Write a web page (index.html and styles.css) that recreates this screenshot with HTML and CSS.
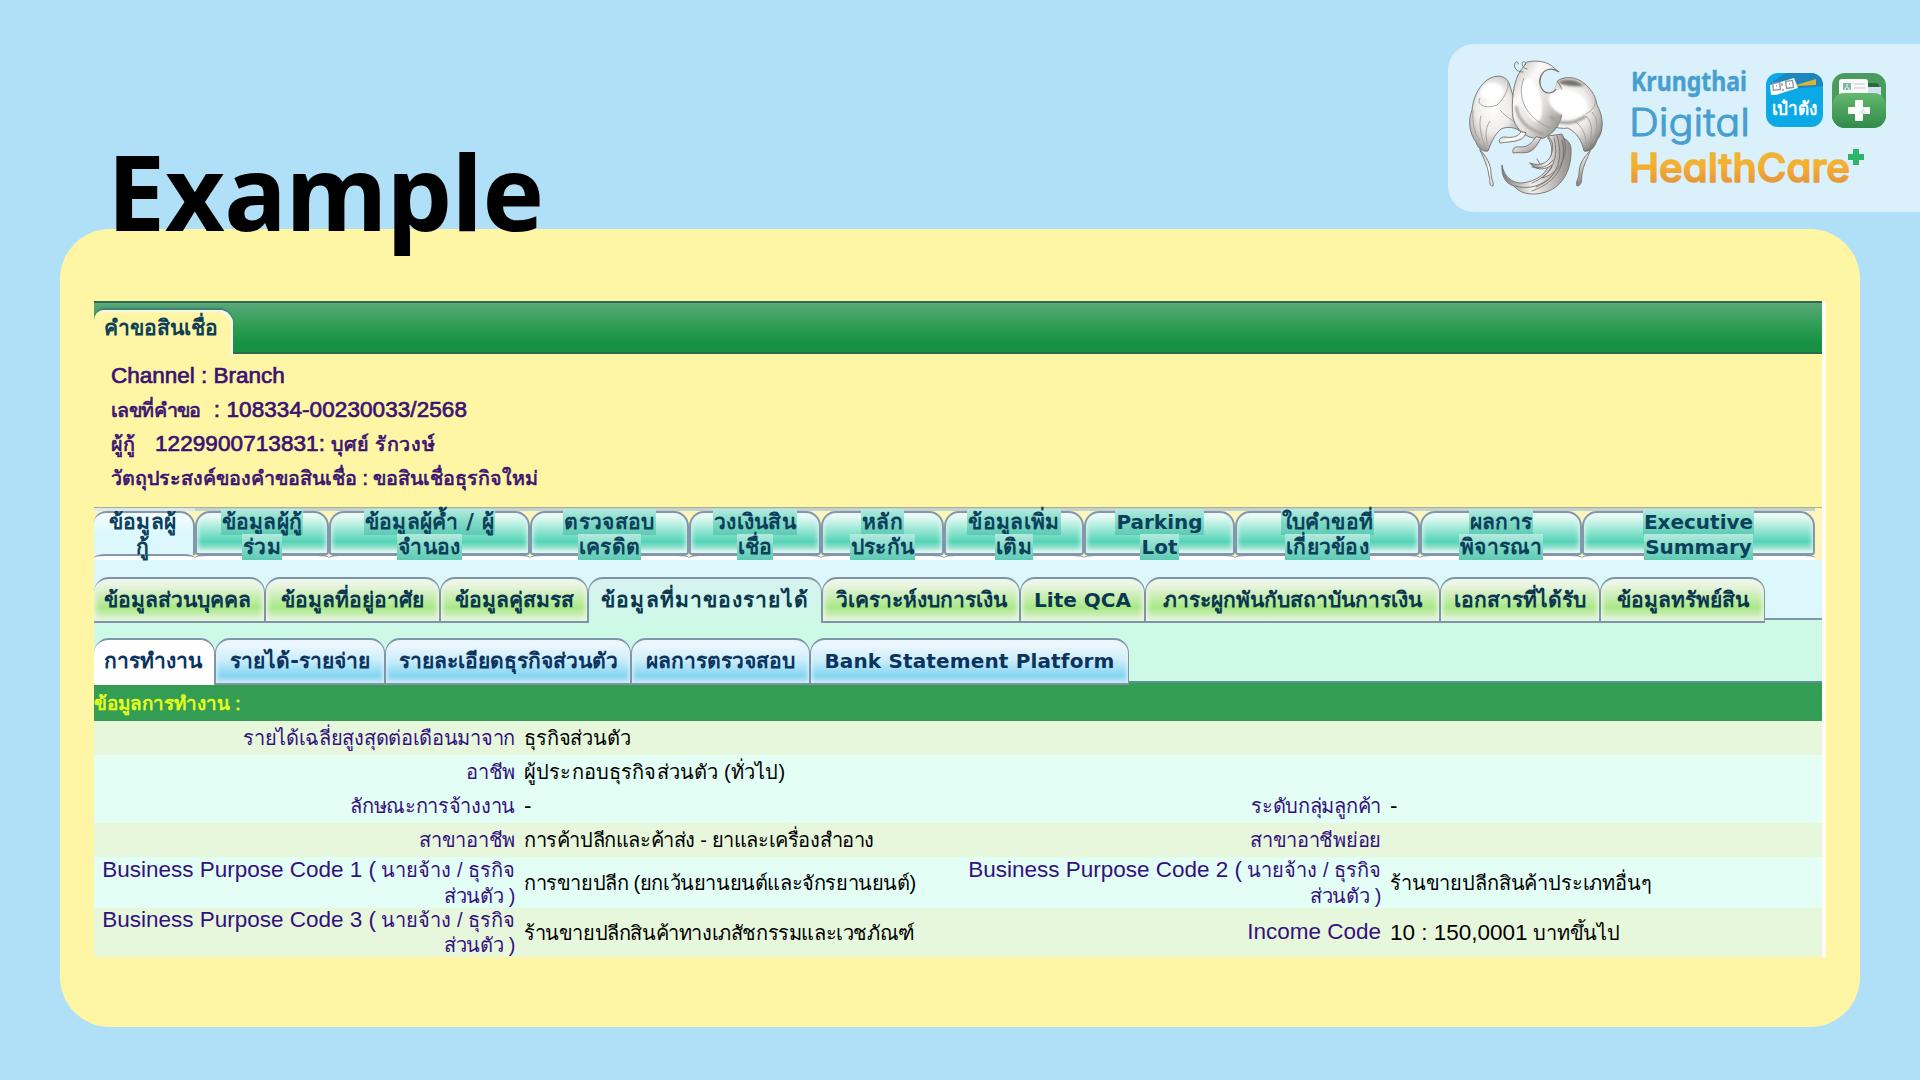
FILE: index.html
```html
<!DOCTYPE html>
<html lang="th">
<head>
<meta charset="utf-8">
<title>Example</title>
<link rel="stylesheet" href="styles.css">
</head>
<body>
<div class="slide">
  <header class="top">
    <h1 class="title">Example</h1>
    <div class="brand">
      <svg class="bird" width="150" height="150" viewBox="0 0 150 150" aria-hidden="true">
        <defs>
          <linearGradient id="silver" x1="0" y1="0" x2="1" y2="1">
            <stop offset="0" stop-color="#b9b5b0"/><stop offset=".3" stop-color="#fbfaf9"/>
            <stop offset=".6" stop-color="#dedbd8"/><stop offset="1" stop-color="#7c7874"/>
          </linearGradient>
          <radialGradient id="wing" cx=".45" cy=".42" r=".65">
            <stop offset="0" stop-color="#fff"/><stop offset=".5" stop-color="#efedeb"/>
            <stop offset=".8" stop-color="#bbb7b3"/><stop offset="1" stop-color="#7f7b78"/>
          </radialGradient>
          <linearGradient id="tail" x1="0" y1="0" x2="1" y2="0">
            <stop offset="0" stop-color="#7d7975"/><stop offset=".45" stop-color="#f4f2f0"/><stop offset="1" stop-color="#918d89"/>
          </linearGradient>
          <filter id="soft"><feGaussianBlur stdDeviation="1.1"/></filter>
        </defs>
        <g stroke="#75716d" stroke-width=".9" stroke-linejoin="round" stroke-linecap="round">
          <path fill="url(#tail)" d="M88 88C98 84 110 88 111 98C112 118 104 136 86 142C70 147 58 142 54 136C46 134 41 126 42 115C44 127 52 133 62 133C78 131 88 123 90 110C93 101 92 94 88 88Z"/>
          <path fill="url(#tail)" d="M70 113C80 117 90 113 92 102C94 95 92 90 88 86L102 84C110 99 104 122 82 128C91 121 92 117 92 115C84 121 74 120 70 113Z"/>
          <path fill="none" d="M97 86C104 108 98 128 76 137M102 90C108 112 98 132 72 141M94 88C99 106 94 124 72 133M55 136C68 140 82 136 92 126M72 117C80 119 88 117 93 110M77 109L80 114"/>
          <path fill="url(#wing)" d="M49 33C46 25 36 24 27 30C17 38 13 50 12 60C8 70 9 83 16 92C18 99 23 102 28 101C31 93 34 85 41 79C48 76 56 77 62 83L58 62Z"/>
          <path fill="url(#wing)" d="M97 31C104 26 116 26 125 34C133 41 136 48 137 55C144 67 144 82 137 90C134 99 130 102 124 101C122 91 117 83 108 78C96 80 86 74 82 66Z"/>
          <path fill="url(#silver)" d="M67 12C76 10 88 11 94 18L99 22C93 19 87 20 82 24C77 31 80 39 88 42C92 44 95 38 97 31C103 38 106 50 103 59C101 73 96 82 84 88C70 91 57 82 53 68C51 54 53 30 61 20Z"/>
          <path fill="url(#silver)" d="M20 100C26 106 31 114 31 123C31 129 34 132 33 136C28 136 31 131 29 126C28 117 24 109 20 100ZM130 101C124 107 119 114 119 123C119 129 115 132 117 136C123 135 121 129 122 124C123 115 128 108 130 101Z"/>
          <path fill="url(#silver)" d="M61 82C58 87 52 88 45 87C40 87 38 90 40 93C46 92 54 92 59 90C63 89 65 86 66 83ZM76 87C72 92 69 97 61 97C54 96 52 99 53 103C60 102 66 104 71 101C76 98 78 93 81 88Z"/>
          <path fill="none" d="M63 22C57 22 53 18 55 13C56 11 59 12 58 14M67 19C62 18 61 13 63 12C65 11 67 13 65 15"/>
        </g>
        <g filter="url(#soft)">
          <ellipse cx="108" cy="53" rx="20" ry="13" fill="#fff" transform="rotate(20 108 53)"/>
          <ellipse cx="72" cy="50" rx="9" ry="22" fill="#fff" transform="rotate(-14 72 50)"/>
          <ellipse cx="32" cy="42" rx="11" ry="9" fill="#fff"/>
          <path d="M98 32C106 28 117 29 124 36C114 37 104 36 98 32Z" fill="#77736f"/>
          <path d="M90 66C100 76 114 74 126 66" fill="none" stroke="#a29e99" stroke-width="3"/>
          <path d="M56 56C58 70 68 80 84 84" fill="none" stroke="#a39f9b" stroke-width="2.5"/>
        </g>
        <path d="M99 22C92 17 84 19 81 26C78 35 82 42 88 43C93 43 96 38 97 31C104 24 101 22 99 22Z" fill="#daf0fb"/>
        <path d="M99 22C92 17 84 19 81 26C78 35 82 42 88 43C92 43 95 41 96 39" fill="none" stroke="#75716d" stroke-width="1.2"/>
        <g fill="none" stroke="#a09c98" stroke-width=".9">
          <path d="M20 48C16 54 25 60 37 55C44 49 49 39 48 32M13 60C12 72 14 83 20 91M21 66C18 75 22 90 26 98M30 71C24 80 26 89 28 96M40 60C47 68 53 70 54 72M126 64C133 60 136 56 135 49M126 66C134 74 132 86 128 98M132 62C140 70 137 82 133 93M114 71C123 76 126 86 127 97M64 28C56 47 66 68 90 78"/>
        </g>
      </svg>
      <svg class="wordmark" width="250" height="130" viewBox="0 0 250 130">
        <defs>
          <linearGradient id="gold" gradientUnits="userSpaceOnUse" x1="0" y1="85" x2="0" y2="120"><stop offset="0" stop-color="#e8b53b"/><stop offset=".5" stop-color="#f6b02e"/><stop offset="1" stop-color="#e5963f"/></linearGradient>
          <linearGradient id="green" x1="0" y1="0" x2="0" y2="1"><stop offset="0" stop-color="#63b96c"/><stop offset="1" stop-color="#2f8a4c"/></linearGradient>
        </defs>
        <text class="wm wm-bank" x="-1" y="28" textLength="116" lengthAdjust="spacingAndGlyphs">Krungthai</text>
        <text class="wm wm-digital" x="-3" y="73" textLength="121" lengthAdjust="spacingAndGlyphs">Digital</text>
        <text class="wm wm-health" x="-3" y="119" textLength="221" lengthAdjust="spacingAndGlyphs">HealthCare</text>
        <path fill="#2fb567" d="M221 86h6v5h5v6h-5v5h-6v-5h-5v-6h5z"/>
      </svg>
      <div class="apps">
        <svg width="57" height="54" viewBox="0 0 57 54">
          <clipPath id="c1"><rect width="57" height="54" rx="12"/></clipPath>
          <g clip-path="url(#c1)">
            <rect width="57" height="54" fill="#0ba9e6"/>
            <path fill="#1d86bf" d="M20 0H57V13L5 18V10Z"/>
            <path fill="#fff" d="M4 12L28 5L32 15L10 22H5Z"/>
            <path fill="#d9b23a" d="M30 12L50 6V12L31 13Z"/>
            <g fill="none" stroke="#8c9aa6" stroke-width="1.4"><rect x="7" y="10" width="7" height="7" transform="rotate(-6 10 13)"/><rect x="20" y="8" width="7" height="7" transform="rotate(-8 23 11)"/><path d="M16 10v3M17 16v2M10 13h1M23 11h1"/></g>
            <text class="app-name" x="6" y="42" textLength="45" lengthAdjust="spacingAndGlyphs">เป๋าตัง</text>
          </g>
        </svg>
        <svg width="54" height="55" viewBox="0 0 54 55">
          <rect width="54" height="55" rx="13" fill="#4a9b5d"/>
          <path fill="#2c6943" d="M36 10h8a3 3 0 0 1 3 4v8H36z"/>
          <rect x="30" y="14" width="19" height="12" fill="#cfe0ee"/>
          <rect x="7" y="6" width="29" height="22" rx="3" fill="#f8fbfa"/>
          <rect x="11" y="10" width="8" height="7" fill="#7db8a6"/><path d="M13 17c0-4 4-4 4 0M15 11v2" stroke="#fff" fill="none"/>
          <path d="M22 11h11M22 15h11" stroke="#d3d6dc" stroke-width="1.5"/>
          <path fill="url(#green)" d="M0 34C0 26 5 20 12 20H42C49 20 54 26 54 34V42A13 13 0 0 1 41 55H13A13 13 0 0 1 0 42Z"/>
          <path fill="#fff" d="M24 27h6q1 0 1 1v6h6q1 0 1 1v5q0 1-1 1h-6v6q0 1-1 1h-6q-1 0-1-1v-6h-6q-1 0-1-1v-5q0-1 1-1h6v-6q0-1 1-1z"/>
          <path fill="#c9dfd0" d="M31 34l-4 7h4l4-1z" opacity=".6"/>
        </svg>
      </div>
    </div>
  </header>

  <main class="card">
    <div class="screen">
      <nav class="main-bar"><div class="main-tab">คำขอสินเชื่อ</div></nav>
      <section class="summary">
        <p><span class="en">Channel : Branch</span></p>
        <p><span class="req">เลขที่คำขอ</span><span class="en gap-a">: 108334-00230033/2568</span></p>
        <p><span>ผู้กู้</span><span class="en gap-b">1229900713831: </span><span class="name">บุศย์ รักวงษ์</span></p>
        <p>วัตถุประสงค์ของคำขอสินเชื่อ : ขอสินเชื่อธุรกิจใหม่</p>
      </section>

      <nav class="tabs-a">
        <div class="ta current"><b>ข้อมูลผู้</b><b>กู้</b></div>
        <div class="ta"><b>ข้อมูลผู้กู้</b><b>ร่วม</b></div>
        <div class="ta"><b>ข้อมูลผู้ค้ำ / ผู้</b><b>จำนอง</b></div>
        <div class="ta"><b>ตรวจสอบ</b><b>เครดิต</b></div>
        <div class="ta"><b>วงเงินสิน</b><b>เชื่อ</b></div>
        <div class="ta"><b>หลัก</b><b>ประกัน</b></div>
        <div class="ta"><b>ข้อมูลเพิ่ม</b><b>เติม</b></div>
        <div class="ta"><b class="en">Parking</b><b class="en">Lot</b></div>
        <div class="ta"><b>ใบคำขอที่</b><b>เกี่ยวข้อง</b></div>
        <div class="ta"><b>ผลการ</b><b>พิจารณา</b></div>
        <div class="ta"><b class="en">Executive</b><b class="en">Summary</b></div>
      </nav>

      <nav class="tabs-b">
        <div class="tb">ข้อมูลส่วนบุคคล</div>
        <div class="tb">ข้อมูลที่อยู่อาศัย</div>
        <div class="tb">ข้อมูลคู่สมรส</div>
        <div class="tb current">ข้อมูลที่มาของรายได้</div>
        <div class="tb">วิเคราะห์งบการเงิน</div>
        <div class="tb"><span class="en">Lite QCA</span></div>
        <div class="tb">ภาระผูกพันกับสถาบันการเงิน</div>
        <div class="tb">เอกสารที่ได้รับ</div>
        <div class="tb">ข้อมูลทรัพย์สิน</div>
      </nav>

      <nav class="tabs-c">
        <div class="tc current">การทำงาน</div>
        <div class="tc">รายได้-รายจ่าย</div>
        <div class="tc">รายละเอียดธุรกิจส่วนตัว</div>
        <div class="tc">ผลการตรวจสอบ</div>
        <div class="tc"><span class="en">Bank Statement Platform</span></div>
      </nav>

      <h2 class="section">ข้อมูลการทำงาน :</h2>
      <dl class="form">
        <div class="row alt"><dt>รายได้เฉลี่ยสูงสุดต่อเดือนมาจาก</dt><dd>ธุรกิจส่วนตัว</dd></div>
        <div class="row"><dt>อาชีพ</dt><dd class="wide">ผู้ประกอบธุรกิจส่วนตัว (ทั่วไป)</dd></div>
        <div class="row"><dt>ลักษณะการจ้างงาน</dt><dd class="en">-</dd><dt>ระดับกลุ่มลูกค้า</dt><dd class="en">-</dd></div>
        <div class="row alt"><dt>สาขาอาชีพ</dt><dd class="tight">การค้าปลีกและค้าส่ง - ยาและเครื่องสำอาง</dd><dt>สาขาอาชีพย่อย</dt><dd></dd></div>
        <div class="row tall"><dt><span class="en">Business Purpose Code 1 (</span> <span class="th">นายจ้าง / ธุรกิจ</span><br>ส่วนตัว )</dt><dd class="tight">การขายปลีก (ยกเว้นยานยนต์และจักรยานยนต์)</dd><dt><span class="en">Business Purpose Code 2 (</span> <span class="th">นายจ้าง / ธุรกิจ</span><br>ส่วนตัว )</dt><dd>ร้านขายปลีกสินค้าประเภทอื่นๆ</dd></div>
        <div class="row tall alt last"><dt><span class="en">Business Purpose Code 3 (</span> <span class="th">นายจ้าง / ธุรกิจ</span><br>ส่วนตัว )</dt><dd class="tight">ร้านขายปลีกสินค้าทางเภสัชกรรมและเวชภัณฑ์</dd><dt class="en">Income Code</dt><dd><span class="en">10 : 150,0001</span> บาทขึ้นไป</dd></div>
      </dl>
    </div>
  </main>
</div>
</body>
</html>
```
FILE: styles.css
```css
* { box-sizing: border-box; }
body {
  margin: 0;
  background: #b0e0f7;
  font-family: "Liberation Sans", sans-serif;
  overflow: hidden;
}
p, h1, h2, dl, dd, dt { margin: 0; }

.slide { width: 1920px; height: 1080px; }

.top {
  height: 229px;
  display: flex;
  justify-content: space-between;
  align-items: flex-start;
  position: relative;
  z-index: 1;
}
.title {
  padding: 120px 0 0 107px;
  font: bold 104px/142px "Noto Sans", sans-serif;
  letter-spacing: -.6px;
  color: #000;
}

.brand {
  width: 472px;
  height: 168px;
  margin-top: 44px;
  padding: 6px 0 0 12px;
  display: flex;
  background: #daf0fb;
  border-radius: 26px 0 0 26px;
}
.bird { flex: none; }
.wordmark { margin: 13px 0 0 22px; overflow: visible; flex: none; }
.wm { font-family: Inter, sans-serif; stroke-linejoin: round; font-feature-settings: "cv11"; }
.wm-bank { font-family: "Noto Sans", sans-serif; font-size: 26.5px; font-weight: 700; fill: #469fd0; stroke: #469fd0; stroke-width: .4; }
.wm-digital { font-size: 38px; font-weight: 300; fill: #469fd0; stroke: #469fd0; stroke-width: 1; }
.wm-health { font-size: 40px; font-weight: 500; fill: url(#gold); stroke: url(#gold); stroke-width: 1.5; }
.apps { display: flex; gap: 9px; margin: 23px 0 0 -116px; align-items: flex-start; flex: none; }
.app-name { font: bold 19px "Noto Sans", sans-serif; fill: #fff; }

.card {
  width: 1800px;
  height: 798px;
  margin-left: 60px;
  padding: 72px 0 0 34px;
  background: #fef6a5;
  border-radius: 50px;
}
.screen {
  width: 1732px;
  height: 656px;
  border-right: 4px solid #fbfdf3;
  overflow: hidden;
}

.main-bar {
  height: 53px;
  padding-top: 7px;
  border-top: 2px solid #2f6a55;
  border-bottom: 2px solid #2a6b4d;
  background: linear-gradient(#5aa878, #34a059 40%, #179243 80%, #1a8f45);
}
.main-tab {
  width: 139px;
  height: 46px;
  padding-left: 10px;
  border-radius: 10px 14px 0 0;
  background: #fef6a5;
  box-shadow: inset -2px 2px 2px #f4f9ee, 0 -2px 2px #3d7d78;
  font: bold 21px/36px "DejaVu Sans", sans-serif;
  color: #0d3f57;
  white-space: nowrap;
}

.summary {
  height: 153px;
  padding: 5px 0 0 17px;
  color: #3b1272;
  font-size: 19.7px;
  -webkit-text-stroke: .7px;
}
.summary p { height: 34px; line-height: 34px; white-space: nowrap; }
.summary .en, .form .en { font-size: 22.5px; }
.summary .req { letter-spacing: -.6px; }
.summary .name { letter-spacing: .6px; }
.summary .gap-a { margin-left: 13px; letter-spacing: .08px; }
.summary .gap-b { margin-left: 20px; white-space: pre; letter-spacing: .08px; }

.tabs-a {
  height: 53px;
  display: grid;
  grid-template-columns: 101px 134px 201px 159px 132px 123px 140px 151px 185px 162px 233px;
  border-top: 1px solid #a5b09c;
  background: #fdf5bd;
  font: bold 21px/26px "DejaVu Sans", sans-serif;
  color: #0b3f5c;
}
.ta {
  position: relative;
  display: flex;
  flex-direction: column;
  align-items: center;
  border-top: 3px solid #c3d0cb;
  letter-spacing: .3px;
}
.ta::before,
.ta::after {
  content: "";
  position: absolute;
  left: 0;
  right: 0;
  border: 2px solid #8397ab;
}
.ta::before {
  top: 0;
  bottom: 5px;
  border-radius: 15px 15px 3px 3px;
  background: linear-gradient(#fbfefd, #b6eee0 30%, #54d3b6 72%, #9be3d2 88%, #eafaf6);
  box-shadow: inset 0 0 5px 1px #e3f4f2;
}
.ta::after {
  bottom: 0;
  height: 4px;
  border-width: 2px 0 0;
  border-radius: 12px 12px 0 0 / 4px 4px 0 0;
  background: #fdfffe;
}
.ta b {
  position: relative;
  z-index: 1;
  height: 26px;
  margin-top: -1px;
  padding: 0 1px;
  white-space: nowrap;
  background: linear-gradient(#b2ebdf, #82dac6 50%, #5ecab4);
}
.ta b:first-of-type { margin-top: -2px; }
.ta.current { border-top-color: #dce9ea; padding-right: 4px; }
.ta.current::before { background: linear-gradient(#f5fdfe, #dcf8fd 50%); border-left: 0; border-radius: 12px 15px 0 0; border-bottom: 0; box-shadow: none; }
.ta.current b { background: none; }
.ta .en, .tb .en, .tc .en { font-size: 20px; letter-spacing: 0; }

.tabs-b {
  height: 60px;
  padding-top: 17px;
  display: grid;
  grid-template-columns: 171px 175px 148px 234px 198px 125px 295px 160px 165px 1fr;
  background: linear-gradient(#8397ab, #8397ab) bottom / 100% 2px no-repeat #dcf8fd;
}
.tb, .tc {
  display: flex;
  justify-content: center;
  border: 2px solid #8094a8;
  border-left-width: 1px;
  border-right-width: 1px;
  border-radius: 15px 15px 0 0;
  font: bold 21px/42px "DejaVu Sans", sans-serif;
  white-space: nowrap;
  color: #0b3650;
}
.tb {
  background: linear-gradient(#f6faf5, #d8f0c8 30%, #a9e886 68%, #d4f0c6 92%);
  box-shadow: inset 0 0 5px 2px #eaf5e6;
}
.tb.current { background: linear-gradient(#d7f2ef, #cdf9e7); box-shadow: none; border-bottom: 0; letter-spacing: 1.1px; }

.tabs-c {
  height: 63px;
  padding-top: 18px;
  display: grid;
  grid-template-columns: 121px 170px 246px 179px 319px 1fr;
  background: linear-gradient(#5f8f8e, #5f8f8e) bottom / 100% 2px no-repeat #cdf9e7;
}
.tc {
  background: linear-gradient(#f4fafe, #cfeefa 45%, #86d6f2 82%, #b0dfee);
  box-shadow: inset 0 0 4px 1px #e2f2fa;
  line-height: 43px;
  color: #0b3360;
}
.tc .en { letter-spacing: .15px; }
.tc.current { background: #fff; border-bottom: 0; box-shadow: none; }
.tb:first-child, .tc:first-child { border-left: 0; padding-right: 3px; }

.section {
  height: 38px;
  background: #339e53;
  color: #eaff1f;
  font: 18.8px/41px "Liberation Sans", sans-serif;
  -webkit-text-stroke: .7px;
}

.form { font-size: 20px; letter-spacing: -.3px; line-height: 34px; color: #000; }
.form .en { letter-spacing: 0; }
.row {
  height: 34px;
  display: grid;
  grid-template-columns: 425px 441px 425px 1fr;
  align-items: center;
  background: #e3fef4;
  white-space: nowrap;
}
.row.alt { background: #e7f7dc; }
.row dt { padding-right: 4px; text-align: right; color: #34117f; }
.row dd { padding-left: 5px; }
.row dd:last-child { letter-spacing: -.15px; }
.row dd.wide { letter-spacing: .15px; }
.row dd.tight { letter-spacing: -.4px; }
.row .th { letter-spacing: 0; }
.row.tall { height: 51px; }
.row.tall dt { line-height: 25.5px; }
.row.last { height: 49px; }
.row.last dt { line-height: 24.5px; }
```
